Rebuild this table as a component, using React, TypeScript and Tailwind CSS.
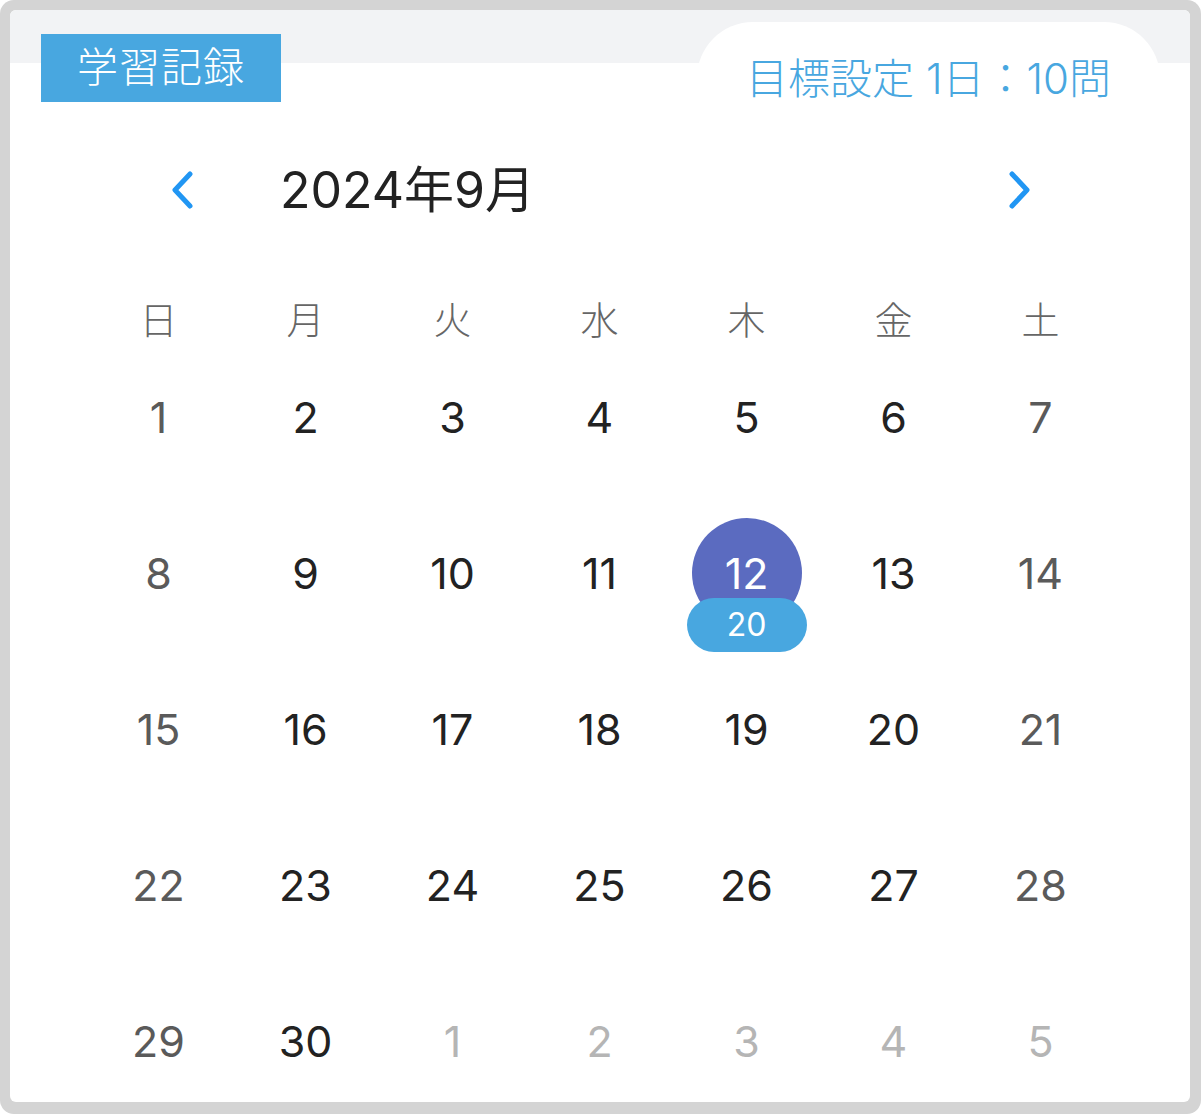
import React from "react";

const FONT = 'Inter, "Noto Sans CJK JP", sans-serif';

type Day = { n: number; muted?: boolean; selected?: boolean; count?: number };

const weekdays = ["日", "月", "火", "水", "木", "金", "土"];

function buildWeeks(): Day[][] {
  const days: Day[] = [];
  for (let i = 1; i <= 30; i++) {
    days.push(i === 12 ? { n: i, selected: true, count: 20 } : { n: i });
  }
  for (let i = 1; i <= 5; i++) days.push({ n: i, muted: true });
  const weeks: Day[][] = [];
  for (let i = 0; i < days.length; i += 7) weeks.push(days.slice(i, i + 7));
  return weeks;
}

function Chevron({ dir }: { dir: "left" | "right" }) {
  return (
    <svg width="24" height="38" viewBox="0 0 24 38" fill="none">
      <polyline
        points={dir === "left" ? "20,3 5,19 20,35" : "4,3 19,19 4,35"}
        stroke="#2196f3"
        strokeWidth="5"
        strokeLinecap="round"
        strokeLinejoin="round"
      />
    </svg>
  );
}

function DayCell({ day, col }: { day: Day; col: number }) {
  const weekend = col === 0 || col === 6;
  const color = day.muted ? "text-[#b5b5b5]" : weekend ? "text-[#5a5a5a]" : "text-[#222222]";

  if (day.selected) {
    return (
      <div className="relative flex h-[156px] items-center justify-center">
        <div className="flex h-[110px] w-[110px] items-center justify-center rounded-full bg-[#5b6bc0] text-[43px] text-white">
          {day.n}
        </div>
        <div className="absolute left-1/2 top-[103px] flex h-[54px] w-[120px] -translate-x-1/2 items-center justify-center rounded-full bg-[#48a7e0] text-[32px] text-white">
          {day.count}
        </div>
      </div>
    );
  }

  return (
    <div className={`flex h-[156px] items-center justify-center text-[43px] ${color}`}>
      {day.n}
    </div>
  );
}

export default function App() {
  const weeks = buildWeeks();

  return (
    <div
      className="h-[1114px] w-[1201px] rounded-[14px] bg-[#d4d4d4] pb-[12px] pl-[10px] pr-[11px] pt-[10px]"
      style={{ fontFamily: FONT }}
    >
      <div className="flex h-full flex-col overflow-hidden rounded-[6px] bg-white">
        {/* header band */}
        <div className="flex h-[120px] shrink-0 items-start justify-between bg-[linear-gradient(to_bottom,#f2f3f5_53px,#ffffff_53px)]">
          <div className="ml-[31px] mt-[24px] flex h-[68px] w-[240px] items-center justify-center bg-[#48a7e0] text-[41px] font-light tracking-[1px] text-white">
            学習記録
          </div>
          <div className="mr-[30px] mt-[12px] flex h-[90px] w-[463px] items-start justify-center rounded-t-[56px] bg-white pt-[29px] text-[42px] font-light leading-[56px] text-[#48a7e0]">
            目標設定 1日：10問
          </div>
        </div>

        {/* month nav */}
        <div className="flex h-[120px] shrink-0 items-center">
          <button className="ml-[160px] flex items-center">
            <Chevron dir="left" />
          </button>
          <div className="ml-[86px] text-[50px] text-[#222222]">2024年9月</div>
          <button className="ml-auto mr-[158px] flex items-center">
            <Chevron dir="right" />
          </button>
        </div>

        {/* weekdays */}
        <div className="ml-[75px] mt-[51px] grid w-[1029px] shrink-0 grid-cols-7">
          {weekdays.map((w) => (
            <div key={w} className="flex h-[38px] items-center justify-center text-[38px] font-light text-[#666666]">
              {w}
            </div>
          ))}
        </div>

        {/* dates */}
        <div className="ml-[75px] grid w-[1029px] shrink-0 grid-cols-7">
          {weeks.map((week, wi) =>
            week.map((d, ci) => <DayCell key={`${wi}-${ci}`} day={d} col={ci} />)
          )}
        </div>
      </div>
    </div>
  );
}
